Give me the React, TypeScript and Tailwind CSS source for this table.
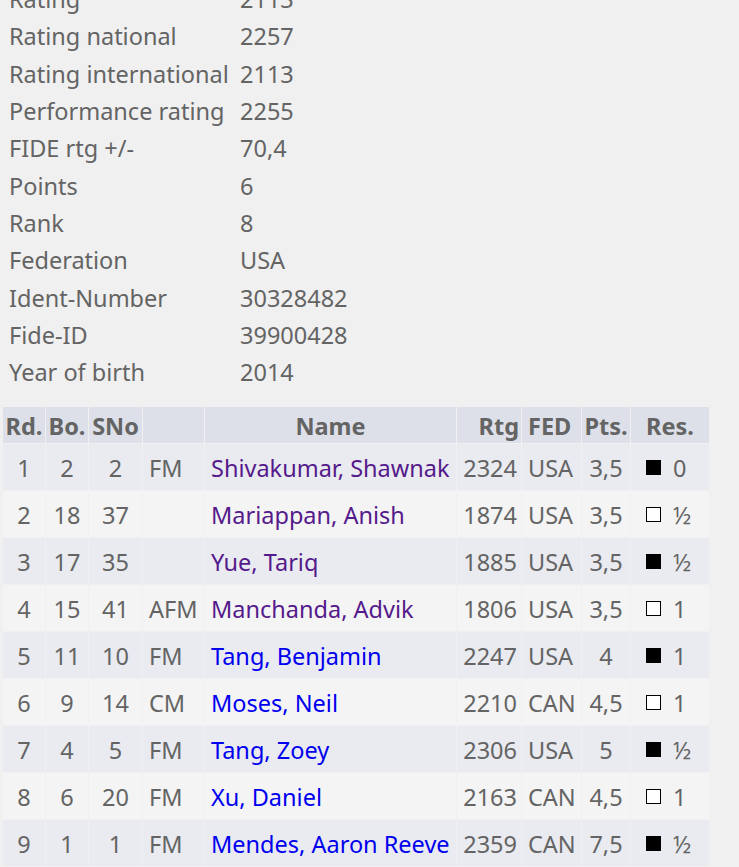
import React from "react";

const info: [string, string][] = [
  ["Rating", "2113"],
  ["Rating national", "2257"],
  ["Rating international", "2113"],
  ["Performance rating", "2255"],
  ["FIDE rtg +/-", "70,4"],
  ["Points", "6"],
  ["Rank", "8"],
  ["Federation", "USA"],
  ["Ident-Number", "30328482"],
  ["Fide-ID", "39900428"],
  ["Year of birth", "2014"],
];

type Row = {
  rd: string;
  bo: string;
  sno: string;
  title: string;
  name: string;
  rtg: string;
  fed: string;
  pts: string;
  black: boolean;
  res: string;
  visited: boolean;
};

const rows: Row[] = [
  { rd: "1", bo: "2", sno: "2", title: "FM", name: "Shivakumar, Shawnak", rtg: "2324", fed: "USA", pts: "3,5", black: true, res: "0", visited: true },
  { rd: "2", bo: "18", sno: "37", title: "", name: "Mariappan, Anish", rtg: "1874", fed: "USA", pts: "3,5", black: false, res: "½", visited: true },
  { rd: "3", bo: "17", sno: "35", title: "", name: "Yue, Tariq", rtg: "1885", fed: "USA", pts: "3,5", black: true, res: "½", visited: true },
  { rd: "4", bo: "15", sno: "41", title: "AFM", name: "Manchanda, Advik", rtg: "1806", fed: "USA", pts: "3,5", black: false, res: "1", visited: true },
  { rd: "5", bo: "11", sno: "10", title: "FM", name: "Tang, Benjamin", rtg: "2247", fed: "USA", pts: "4", black: true, res: "1", visited: false },
  { rd: "6", bo: "9", sno: "14", title: "CM", name: "Moses, Neil", rtg: "2210", fed: "CAN", pts: "4,5", black: false, res: "1", visited: false },
  { rd: "7", bo: "4", sno: "5", title: "FM", name: "Tang, Zoey", rtg: "2306", fed: "USA", pts: "5", black: true, res: "½", visited: false },
  { rd: "8", bo: "6", sno: "20", title: "FM", name: "Xu, Daniel", rtg: "2163", fed: "CAN", pts: "4,5", black: false, res: "1", visited: false },
  { rd: "9", bo: "1", sno: "1", title: "FM", name: "Mendes, Aaron Reeve", rtg: "2359", fed: "CAN", pts: "7,5", black: true, res: "½", visited: false },
];

export default function App() {
  return (
    <div
      className="min-h-[867px] w-full overflow-hidden bg-[#f0f0f0] text-[#646464] text-[23.5px]"
      style={{ fontFamily: '"Segoe UI", "Noto Sans", sans-serif' }}
    >
      <div className="-mt-[19px] pl-[9px]">
        {info.map(([k, v]) => (
          <div key={k} className="flex h-[37.33px] items-center leading-none">
            <div className="w-[231px] shrink-0">{k}</div>
            <div>{v}</div>
          </div>
        ))}
      </div>
      <table
        className="mt-[14px] ml-[2px] table-fixed border-separate border-spacing-[1px]"
        style={{ width: 708 }}
      >
        <colgroup>
          <col style={{ width: 42 }} />
          <col style={{ width: 42 }} />
          <col style={{ width: 53 }} />
          <col style={{ width: 61 }} />
          <col style={{ width: 251 }} />
          <col style={{ width: 64 }} />
          <col style={{ width: 59 }} />
          <col style={{ width: 48 }} />
          <col style={{ width: 78 }} />
        </colgroup>
        <thead>
          <tr className="h-[36px] bg-[#dde0e8] font-bold leading-none">
            <th className="px-0 pt-[5px] text-center whitespace-nowrap">Rd.</th>
            <th className="px-0 pt-[5px] text-center whitespace-nowrap">Bo.</th>
            <th className="px-0 pt-[5px] text-center whitespace-nowrap">SNo</th>
            <th></th>
            <th className="pt-[5px] text-center">Name</th>
            <th className="pt-[5px] pr-[2px] text-right">Rtg</th>
            <th className="pt-[5px] pl-[6px] text-left">FED</th>
            <th className="pt-[5px] text-center whitespace-nowrap">Pts.</th>
            <th className="pt-[5px] text-center">Res.</th>
          </tr>
        </thead>
        <tbody>
          {rows.map((r, i) => (
            <tr
              key={r.rd}
              className={`h-[46px] leading-none ${i % 2 === 0 ? "bg-[#eaebf0]" : "bg-[#f4f4f4]"}`}
            >
              <td className="pt-[5px] text-center">{r.rd}</td>
              <td className="pt-[5px] text-center">{r.bo}</td>
              <td className="pt-[5px] text-center">{r.sno}</td>
              <td className="pt-[5px] pl-[6px]">{r.title}</td>
              <td className={`pt-[5px] pl-[6px] whitespace-nowrap ${r.visited ? "text-[#551a8b]" : "text-[#0000ee]"}`}>
                {r.name}
              </td>
              <td className="pt-[5px] pr-[4px] text-right">{r.rtg}</td>
              <td className="pt-[5px] pl-[6px]">{r.fed}</td>
              <td className="pt-[5px] text-center">{r.pts}</td>
              <td className="pl-[15px]">
                <div className="flex items-center pt-[2px]">
                  <span
                    className={`inline-block h-[15px] w-[15px] ${r.black ? "bg-black" : "border border-black bg-white"}`}
                  />
                  <span className="ml-[12px] pt-[3px]">{r.res}</span>
                </div>
              </td>
            </tr>
          ))}
        </tbody>
      </table>
    </div>
  );
}
